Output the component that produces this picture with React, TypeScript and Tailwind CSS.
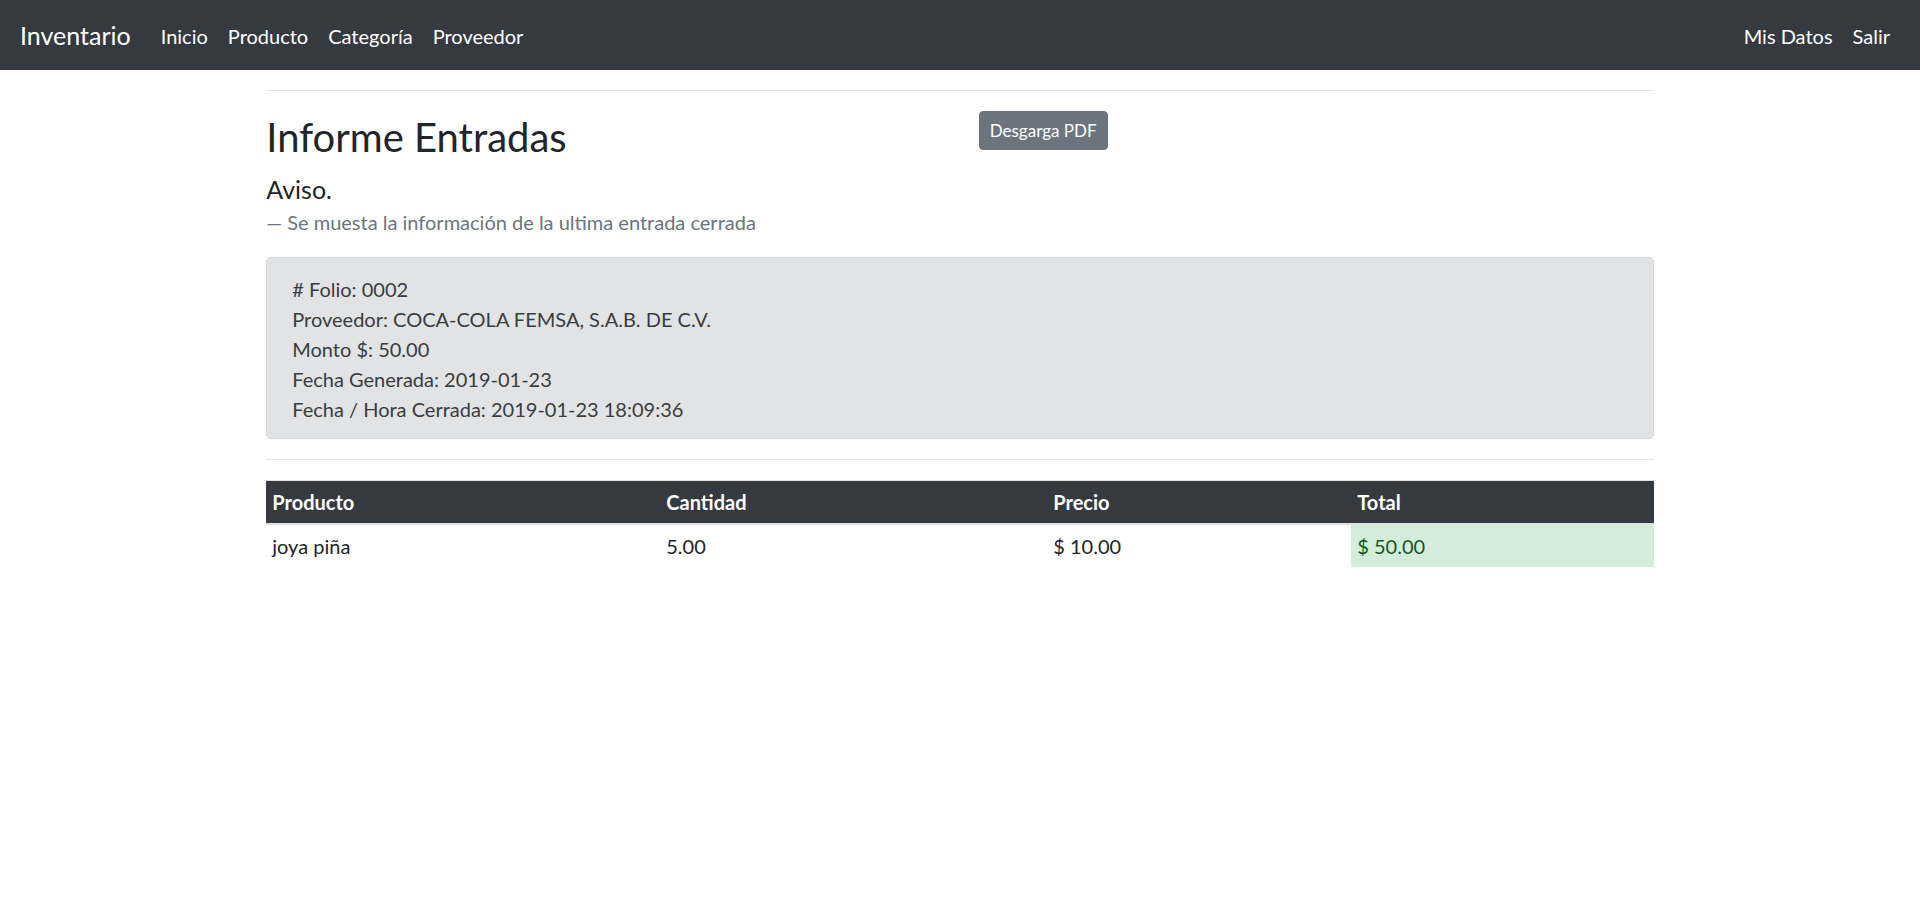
import React from "react";

const font = { fontFamily: "Lato, 'Open Sans', 'Noto Sans', sans-serif" };

export default function App() {
  return (
    <div className="min-h-[910px] bg-white text-[#212529] text-[20px] leading-[30px]" style={font}>
      <nav className="h-[70px] bg-[#343a40] flex items-center justify-between px-[20px]">
        <div className="flex items-center">
          <span className="text-white text-[25px] leading-[37.5px] pt-[7.25px] pb-[5.25px] mr-[20px]">Inventario</span>
          <div className="flex">
            {["Inicio", "Producto", "Categoría", "Proveedor"].map((t) => (
              <span key={t} className="text-white px-[10px] pt-[11px] pb-[9px]">{t}</span>
            ))}
          </div>
        </div>
        <div className="flex">
          {["Mis Datos", "Salir"].map((t) => (
            <span key={t} className="text-white px-[10px] pt-[11px] pb-[9px]">{t}</span>
          ))}
        </div>
      </nav>

      <div className="w-[1387.5px] mx-auto">
        <div className="pt-[20px]">
          <div className="h-px bg-[#e6e6e6]" />
        </div>
        <div className="flex mt-[20px]">
          <div className="w-[693.75px]">
            <h2 className="text-[40px] leading-[48px] font-normal pt-[2px] mb-[8px]">Informe Entradas</h2>
          </div>
          <div className="pl-[18.75px]">
            <button className="bg-[#6c757d] border border-[#6c757d] text-white text-[17px] leading-[27.25px] px-[10px] py-[5px] rounded-[4px]">
              Desgarga PDF
            </button>
          </div>
        </div>
        <div className="mb-[20px]">
          <p className="text-[25px] h-[37.5px] pt-[2px] leading-[37.5px]">Aviso.</p>
          <div className="text-[20px] leading-[30px] text-[#6c757d]">— Se muesta la información de la ultima entrada cerrada</div>
        </div>
        <div className="bg-[#e2e3e5] border border-[#d6d8db] text-[#383d41] rounded-[5px] px-[25px] pt-[16px] pb-[14px]">
          <div># Folio: 0002</div>
          <div>Proveedor: COCA-COLA FEMSA, S.A.B. DE C.V.</div>
          <div>Monto $: 50.00</div>
          <div>Fecha Generada: 2019-01-23</div>
          <div>Fecha / Hora Cerrada: 2019-01-23 18:09:36</div>
        </div>
        <div className="h-px bg-[#e6e6e6] mt-[20px] mb-[20px]" />
        <table className="w-full table-fixed border-collapse">
          <colgroup>
            <col className="w-[394px]" />
            <col className="w-[387px]" />
            <col className="w-[304px]" />
            <col />
          </colgroup>
          <thead>
            <tr className="bg-[#343a40] text-white">
              {["Producto", "Cantidad", "Precio", "Total"].map((t) => (
                <th key={t} className="text-left font-bold px-[6px] py-[6px] border-t border-t-[#dee2e6] border-b-2 border-b-[#dee2e6]">{t}</th>
              ))}
            </tr>
          </thead>
          <tbody>
            <tr>
              <td className="px-[6px] py-[6px]">joya piña</td>
              <td className="px-[6px] py-[6px]">5.00</td>
              <td className="px-[6px] py-[6px]">$ 10.00</td>
              <td className="px-[6px] py-[6px] bg-[#d4edda] text-[#155724]">$ 50.00</td>
            </tr>
          </tbody>
        </table>
      </div>
    </div>
  );
}
